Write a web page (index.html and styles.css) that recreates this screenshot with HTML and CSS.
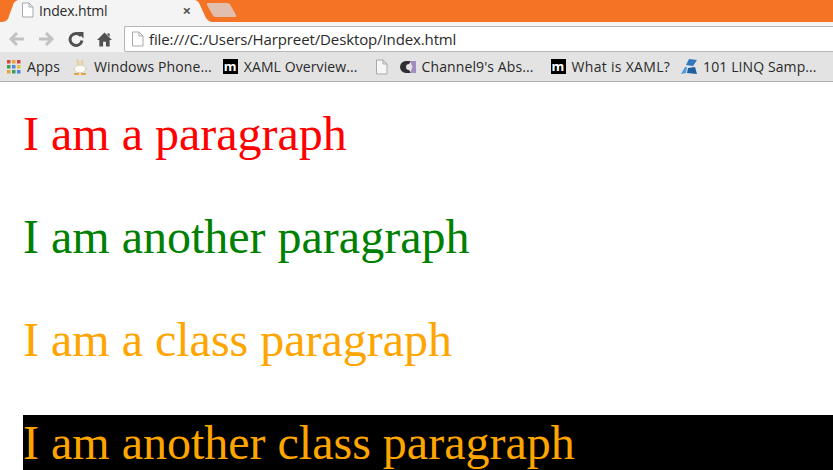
FILE: index.html
```html
<!DOCTYPE html>
<html lang="en">
<head>
    <meta charset="utf-8">
    <title>Index.html</title>
    <link rel="stylesheet" href="styles.css">
</head>
<body>
    <div class="browser">
        <div class="tabstrip">
            <svg class="tab-shape" width="240" height="22" viewBox="0 0 240 22">
                <path d="M0 22 C6 22 8 20 9 16 L13 5 C14 2 16 0 20 0 L193 0 C197 0 199 2 200 5 L205 16 C207 20 209 22 214 22 Z" fill="#f4f4f4"/>
                <path d="M208 3 L227 3 C229 3 230 4 231 6 L236 15 C236.500 16 236 17 235 17 L216 17 C214 17 213 16 212 14 L207 5 C206.500 4 207 3 208 3 Z" fill="#e0bfae"/>
            </svg>
            <div class="tab">
                <svg class="page-icon" width="13" height="16" viewBox="0 0 13 16"><path d="M1.500 1 H8 L12 5 V15 H1.500 Z M8 1 V5 H12" fill="#fff" stroke="#a9a9a9"/></svg>
                <span class="tab-title">Index.html</span>
                <span class="tab-close">×</span>
            </div>
        </div>
        <div class="toolbar">
            <svg width="17" height="16" viewBox="0 0 17 16"><path d="M16 8 H3 M9 2 L3 8 L9 14" fill="none" stroke="#c2c2c2" stroke-width="3"/></svg>
            <svg width="17" height="16" viewBox="0 0 17 16"><path d="M1 8 H14 M8 2 L14 8 L8 14" fill="none" stroke="#c2c2c2" stroke-width="3"/></svg>
            <svg width="16" height="16" viewBox="0 0 16 16"><path d="M13 5 A6 6 0 1 0 14 9.500" fill="none" stroke="#505050" stroke-width="3"/><path d="M9 1 H15.500 V7.500 Z" fill="#505050"/></svg>
            <svg width="15" height="15" viewBox="0 0 16 15"><path d="M8 0 L16 8 H13.500 V15 H9.500 V10 H6.500 V15 H2.500 V8 H0 Z M11 1 H13.500 V4.500 L11 2.500 Z" fill="#505050"/></svg>
            <div class="omnibox">
                <svg class="page-icon" width="13" height="16" viewBox="0 0 13 16"><path d="M1.500 1 H8 L12 5 V15 H1.500 Z M8 1 V5 H12" fill="#fff" stroke="#a9a9a9"/></svg>
                <span class="url">file:///C:/Users/Harpreet/Desktop/Index.html</span>
            </div>
        </div>
        <div class="bookmarks">
            <a class="bookmark b-apps">
                <svg width="14" height="14" viewBox="0 0 14 14">
                    <rect x="0" y="0" width="3.500" height="3.500" fill="#d9453d"/><rect x="5" y="0" width="3.500" height="3.500" fill="#e8a33d"/><rect x="10" y="0" width="3.500" height="3.500" fill="#d9453d"/>
                    <rect x="0" y="5" width="3.500" height="3.500" fill="#3f9c56"/><rect x="5" y="5" width="3.500" height="3.500" fill="#4a86e0"/><rect x="10" y="5" width="3.500" height="3.500" fill="#e8c23d"/>
                    <rect x="0" y="10" width="3.500" height="3.500" fill="#e8a33d"/><rect x="5" y="10" width="3.500" height="3.500" fill="#3f9c56"/><rect x="10" y="10" width="3.500" height="3.500" fill="#4a86e0"/>
                </svg>
                Apps
            </a>
            <a class="bookmark b-phone">
                <svg width="16" height="18" viewBox="0 0 16 18"><ellipse cx="8" cy="11" rx="6" ry="4" fill="#fbfaf6" stroke="#cfc9b5"/><path d="M4 2 L5.500 7 L7.500 7 L6.500 1 Z M9 1.500 L9 7 L11 7 L11.500 2 Z" fill="#e2d29c"/><path d="M2 16 H7 M9 16 H14" stroke="#e0a94a" stroke-width="2"/></svg>
                Windows Phone...
            </a>
            <a class="bookmark b-xaml">
                <span class="m-logo">m</span>
                XAML Overview...
            </a>
            <a class="bookmark b-blank">
                <svg class="page-icon" width="13" height="16" viewBox="0 0 13 16"><path d="M1.500 1 H8 L12 5 V15 H1.500 Z M8 1 V5 H12" fill="#f6f6f6" stroke="#a9a9a9"/></svg>
            </a>
            <a class="bookmark b-nine">
                <svg width="16" height="12" viewBox="0 0 16 12"><path d="M6 0 H11 L9 3 A3 3 0 0 0 9 9 L11 12 H6 A6 6 0 0 1 6 0 Z" fill="#2f2f33"/><path d="M10 0 H16 V12 H10 L12.500 6 Z" fill="#a58cc0"/></svg>
                Channel9's Abs...
            </a>
            <a class="bookmark b-what">
                <span class="m-logo">m</span>
                What is XAML?
            </a>
            <a class="bookmark b-linq">
                <svg width="16" height="17" viewBox="0 0 16 17"><path d="M8 1 L16 2 L12 8 L5 7 Z" fill="#2f78bd"/><path d="M0 16 L4 9 L6 9 L5 15 Z" fill="#4f9ad8"/><path d="M7 10 L14 9 L16 16 L6 15 Z" fill="#1f5e9f"/></svg>
                101 LINQ Samp...
            </a>
        </div>
    </div>
    <main class="page">
        <p class="red">I am a paragraph</p>
        <p class="green">I am another paragraph</p>
        <p class="orange">I am a class paragraph</p>
        <p class="orange on-black">I am another class paragraph</p>
    </main>
</body>
</html>
```

FILE: styles.css
```css
html, body {
    margin: 0;
    height: 470px;
    overflow: hidden;
    background-color: #ffffff;
}
.browser {
    font-family: "Open Sans", sans-serif;
    color: #2a2a2a;
}
.tabstrip {
    position: relative;
    height: 22px;
    background-color: #f57324;
}
.tab-shape {
    position: absolute;
    left: 0;
    top: 0;
}
.tab {
    position: relative;
    display: flex;
    align-items: center;
    height: 20px;
    width: 170px;
    padding-left: 21px;
}
.tab-title {
    margin-left: 5px;
    font-size: 14px;
    letter-spacing: -0.15px;
}
.tab-close {
    margin-left: auto;
    font-size: 15px;
    font-weight: bold;
    color: #555555;
}
.toolbar {
    display: flex;
    align-items: center;
    box-sizing: border-box;
    height: 30px;
    padding: 4px 0 0 8px;
    gap: 13px;
    background-color: #f4f4f4;
}
.omnibox {
    display: flex;
    align-items: center;
    box-sizing: border-box;
    flex: 1;
    height: 26px;
    margin-left: -1px;
    padding-left: 6px;
    gap: 5px;
    background-color: #ffffff;
    border: 1px solid #b5b5b5;
    border-right: none;
    border-radius: 2px 0 0 2px;
}
.url {
    font-size: 15px;
    letter-spacing: -0.12px;
}
.bookmarks {
    display: flex;
    align-items: center;
    height: 29px;
    padding-left: 7px;
    background-color: #e3e3e3;
    border-bottom: 1px solid #b0b0b0;
    white-space: nowrap;
}
.bookmark {
    display: flex;
    align-items: center;
    gap: 6px;
    font-size: 14px;
    letter-spacing: 0.1px;
}
.b-phone { margin-left: 12px; }
.b-xaml { margin-left: 11px; }
.b-blank { margin-left: 17px; }
.b-nine { margin-left: 12px; }
.b-what { margin-left: 17px; letter-spacing: 0.3px; }
.b-linq { margin-left: 11px; }
.m-logo {
    display: inline-flex;
    align-items: center;
    justify-content: center;
    width: 15px;
    height: 15px;
    background-color: #000000;
    color: #ffffff;
    font-size: 13px;
    font-weight: bold;
    line-height: 1;
}
.page {
    padding: 24px 0 0 23px;
    font-family: "Liberation Serif", serif;
}
.page p {
    margin: 0 0 48px;
    font-size: 48px;
    line-height: 55px;
}
.red { color: #ff0000; }
.green { color: #008000; }
.orange { color: #ffa500; }
.on-black { background-color: #000000; }
```
